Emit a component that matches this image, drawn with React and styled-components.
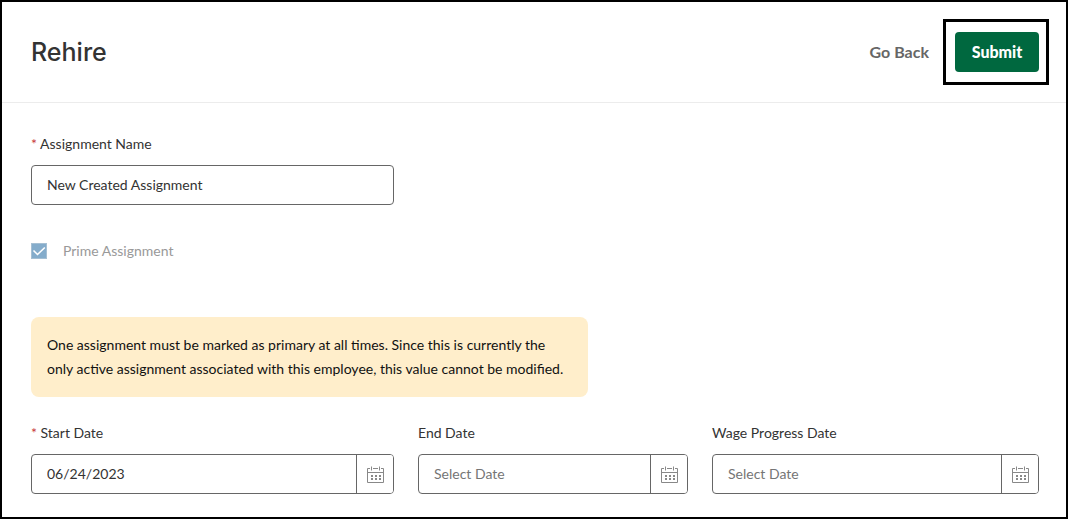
import React from "react";
import styled, { createGlobalStyle } from "styled-components";

const GlobalStyle = createGlobalStyle`
  * {
    box-sizing: border-box;
  }

  body {
    margin: 0;
    background: #fff;
    color: #333;
    font-family: Lato, "Liberation Sans", sans-serif;
    font-size: 14px;
    line-height: 24px;
  }
`;

const Page = styled.div`
  min-height: 100vh;
  border: 2px solid #000;
`;

const Header = styled.header`
  display: flex;
  align-items: center;
  justify-content: space-between;
  padding: 17px 17px 17px 29px;
  border-bottom: 1px solid #ececec;
`;

const Title = styled.h1`
  margin: 0;
  font-family: Inter, sans-serif;
  font-size: 25px;
  font-weight: 500;
  line-height: 32px;
`;

const Actions = styled.div`
  display: flex;
  align-items: center;
  gap: 14px;
`;

const BackButton = styled.button`
  padding: 0;
  border: 0;
  background: none;
  color: #666;
  font: inherit;
  font-size: 16px;
  font-weight: 700;
`;

const Highlight = styled.div`
  padding: 10px 7px 10px 9px;
  border: 3px solid #000;
`;

const SubmitButton = styled.button`
  display: block;
  min-width: 84px;
  height: 40px;
  padding: 0 16px;
  border: 0;
  border-radius: 4px;
  background: #00683f;
  color: #fff;
  font: inherit;
  font-size: 16px;
  font-weight: 900;
`;

const Form = styled.form`
  padding: 29px 27px 23px 29px;
`;

const FieldGrid = styled.div`
  display: grid;
  grid-template-columns: 363fr 270fr 327fr;
  gap: 24px;
`;

const Field = styled.div`
  display: flex;
  flex-direction: column;
  gap: 9px;
  min-width: 0;
`;

const Label = styled.label``;

const Required = styled.span`
  color: #c8383c;
`;

const InputGroup = styled.div`
  display: flex;
  height: 40px;
  border: 1px solid #666;
  border-radius: 4px;
  overflow: hidden;
`;

const Input = styled.input`
  flex: 1;
  min-width: 0;
  padding: 0 15px;
  border: 0;
  outline: 0;
  background: none;
  color: #333;
  font: inherit;

  &::placeholder {
    color: #757575;
    opacity: 1;
  }
`;

const CalendarButton = styled.button`
  display: flex;
  align-items: center;
  justify-content: center;
  width: 37px;
  padding: 0;
  border: 0;
  border-left: 1px solid #666;
  background: #fff;
  color: #888;
`;

const CheckRow = styled.label`
  display: flex;
  align-items: center;
  gap: 16px;
  margin: 34px 0 54px;
  color: #999;
`;

const Checkbox = styled.input`
  appearance: none;
  width: 16px;
  height: 16px;
  margin: 0;
  border: 1px solid #a5bfd3;
  background: #84accb
    url("data:image/svg+xml,%3Csvg xmlns='http://www.w3.org/2000/svg' viewBox='0 0 14 14'%3E%3Cpath d='M1.5 6.5l4 4L12.8 3.5' fill='none' stroke='white' stroke-width='1.6'/%3E%3C/svg%3E");
`;

const Notice = styled.p`
  max-width: 557px;
  margin: 0 0 24px;
  padding: 16px;
  border-radius: 8px;
  background: #ffeecb;
  color: #111;
`;

const CalendarIcon = () => (
  <svg width="17" height="17" viewBox="0 0 17 17" fill="none" aria-hidden="true">
    <path
      d="M3 2.5H.5v14h16v-14H14M6 2.5h5M.5 6.5h16M4.5 .5v4M12.5 .5v4"
      stroke="currentColor"
    />
    <path
      d="M4 9h2v2H4zM8 9h2v2H8zM12 9h2v2h-2zM4 12h2v2H4zM8 12h2v2H8zM12 12h2v2h-2z"
      fill="currentColor"
    />
  </svg>
);

const DateField = ({ id, label, value, required }) => {
  return (
    <Field>
      <Label htmlFor={id}>
        {required && <Required>* </Required>}
        {label}
      </Label>
      <InputGroup>
        <Input id={id} defaultValue={value} placeholder="Select Date" />
        <CalendarButton type="button" aria-label={`Choose ${label}`}>
          <CalendarIcon />
        </CalendarButton>
      </InputGroup>
    </Field>
  );
};

export const App = () => {
  return (
    <Page>
      <GlobalStyle />
      <Header>
        <Title>Rehire</Title>
        <Actions>
          <BackButton type="button">Go Back</BackButton>
          <Highlight>
            <SubmitButton type="submit" form="rehire">
              Submit
            </SubmitButton>
          </Highlight>
        </Actions>
      </Header>
      <Form id="rehire">
        <FieldGrid>
          <Field>
            <Label htmlFor="name">
              <Required>* </Required>
              Assignment Name
            </Label>
            <InputGroup>
              <Input id="name" defaultValue="New Created Assignment" />
            </InputGroup>
          </Field>
        </FieldGrid>
        <CheckRow>
          <Checkbox type="checkbox" defaultChecked disabled />
          Prime Assignment
        </CheckRow>
        <Notice>
          One assignment must be marked as primary at all times. Since this is
          currently the only active assignment associated with this employee,
          this value cannot be modified.
        </Notice>
        <FieldGrid>
          <DateField id="start" label="Start Date" value="06/24/2023" required />
          <DateField id="end" label="End Date" />
          <DateField id="wage" label="Wage Progress Date" />
        </FieldGrid>
      </Form>
    </Page>
  );
};

export default App;
